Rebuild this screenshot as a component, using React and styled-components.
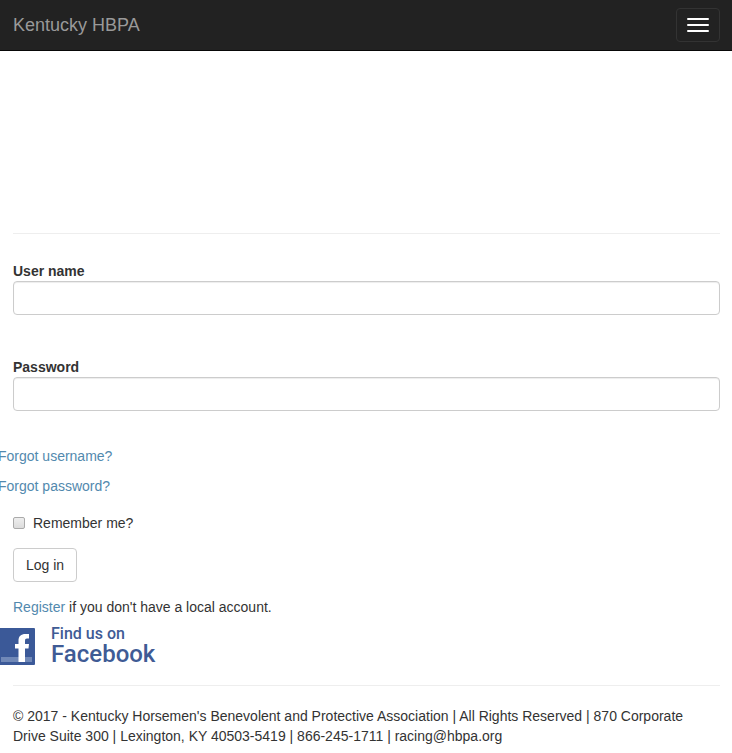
import React from "react";
import styled, { createGlobalStyle } from "styled-components";

const GlobalStyle = createGlobalStyle`
  *, *::before, *::after { box-sizing: border-box; }
  body {
    margin: 0;
    background: #fff;
    color: #333;
    font: 14px/20px "Liberation Sans", Arial, sans-serif;
    overflow-x: hidden;
  }
`;

const Navbar = styled.header`
  display: flex;
  align-items: center;
  justify-content: space-between;
  height: 51px;
  padding: 0 12px 0 13px;
  background: #222;
  border-bottom: 1px solid #080808;
`;

const Brand = styled.a`
  color: #999;
  font-size: 18px;
  text-decoration: none;
`;

const MenuToggle = styled.button`
  display: flex;
  flex-direction: column;
  gap: 4px;
  padding: 9px 10px;
  background: transparent;
  border: 1px solid #333;
  border-radius: 4px;
  cursor: pointer;
`;

const MenuBar = styled.span`
  width: 22px;
  height: 2px;
  border-radius: 1px;
  background: #fff;
`;

const Page = styled.div`
  padding: 182px 12px 0 13px;
`;

const Divider = styled.hr`
  margin: 0;
  border: 0;
  border-top: 1px solid #eee;
`;

const LoginForm = styled.form`
  display: flex;
  flex-direction: column;
  padding-top: 27px;
`;

const Field = styled.div`
  display: flex;
  flex-direction: column;
  margin-bottom: ${(p) => (p.$last ? "35px" : "42px")};
`;

const FieldLabel = styled.label`
  font-weight: bold;
`;

const TextInput = styled.input`
  width: 100%;
  height: 34px;
  padding: 6px 12px;
  font: inherit;
  color: #555;
  background: #fff;
  border: 1px solid #ccc;
  border-radius: 4px;
  box-shadow: inset 0 1px 1px rgba(0, 0, 0, 0.075);
`;

const RecoveryLinks = styled.div`
  display: flex;
  flex-direction: column;
  align-items: flex-start;
  gap: 10px;
  margin: 0 -15px 17px;
`;

const TextLink = styled.a`
  color: #5289ae;
  text-decoration: none;
`;

const Remember = styled.div`
  display: flex;
  align-items: center;
  gap: 8px;
  margin-bottom: 15px;
`;

const Checkbox = styled.input`
  appearance: none;
  width: 12px;
  height: 12px;
  margin: 0;
  border: 1px solid #aaa;
  border-radius: 2px;
  background: linear-gradient(#eee, #dcdcdc);
  &:checked {
    background: #428bca;
  }
`;

const SubmitButton = styled.button`
  align-self: flex-start;
  height: 34px;
  padding: 0 12px;
  font: inherit;
  color: #333;
  background: #fff;
  border: 1px solid #ccc;
  border-radius: 4px;
  cursor: pointer;
`;

const RegisterNote = styled.p`
  margin: 15px 0 10px;
`;

const FacebookLink = styled.a`
  display: inline-flex;
  align-items: center;
  gap: 16px;
  height: 38px;
  margin: 0 0 20px -15px;
  color: #3f5b95;
  text-decoration: none;
  vertical-align: top;
`;

const FacebookText = styled.span`
  display: flex;
  flex-direction: column;
  font-family: Roboto, sans-serif;
  font-weight: 500;
`;

const FindUs = styled.span`
  font-size: 16px;
  line-height: 16px;
`;

const FacebookName = styled.span`
  font-size: 24px;
  line-height: 24px;
`;

const Footer = styled.footer`
  padding: 20px 16px 7px 0;
  p { margin: 0; }
`;

function FacebookIcon() {
  return (
    <svg width="37" height="38" viewBox="0 0 37 38" aria-hidden="true">
      <rect y="1" width="37" height="37" rx="1" fill="#3b5998" />
      <rect x="3" y="30" width="31" height="5" fill="#7088b7" />
      <path
        d="M20.5 35V21.5H17V17H20.5V14C20.5 9 23 7 27.5 7H31V11.5H29C27.5 11.5 27 12.3 27 14V17H31L30.5 21.5H27V35Z"
        fill="#fff"
      />
    </svg>
  );
}

export default function App() {
  return (
    <>
      <GlobalStyle />
      <Navbar>
        <Brand href="#">Kentucky HBPA</Brand>
        <MenuToggle type="button" aria-label="Toggle navigation">
          <MenuBar />
          <MenuBar />
          <MenuBar />
        </MenuToggle>
      </Navbar>
      <Page>
        <main>
          <Divider />
          <LoginForm onSubmit={(e) => e.preventDefault()}>
            <Field>
              <FieldLabel htmlFor="username">User name</FieldLabel>
              <TextInput id="username" type="text" autoComplete="username" />
            </Field>
            <Field $last>
              <FieldLabel htmlFor="password">Password</FieldLabel>
              <TextInput id="password" type="password" autoComplete="current-password" />
            </Field>
            <RecoveryLinks>
              <TextLink href="#">Forgot username?</TextLink>
              <TextLink href="#">Forgot password?</TextLink>
            </RecoveryLinks>
            <Remember>
              <Checkbox id="remember" type="checkbox" />
              <label htmlFor="remember">Remember me?</label>
            </Remember>
            <SubmitButton type="submit">Log in</SubmitButton>
          </LoginForm>
          <RegisterNote>
            <TextLink href="#">Register</TextLink> if you don't have a local account.
          </RegisterNote>
          <FacebookLink href="#">
            <FacebookIcon />
            <FacebookText>
              <FindUs>Find us on</FindUs>
              <FacebookName>Facebook</FacebookName>
            </FacebookText>
          </FacebookLink>
        </main>
        <Divider />
        <Footer>
          <p>
            © 2017 - Kentucky Horsemen's Benevolent and Protective Association | All Rights
            Reserved | 870 Corporate Drive Suite 300 | Lexington, KY 40503-5419 | 866-245-1711 |
            racing@hbpa.org
          </p>
        </Footer>
      </Page>
    </>
  );
}
